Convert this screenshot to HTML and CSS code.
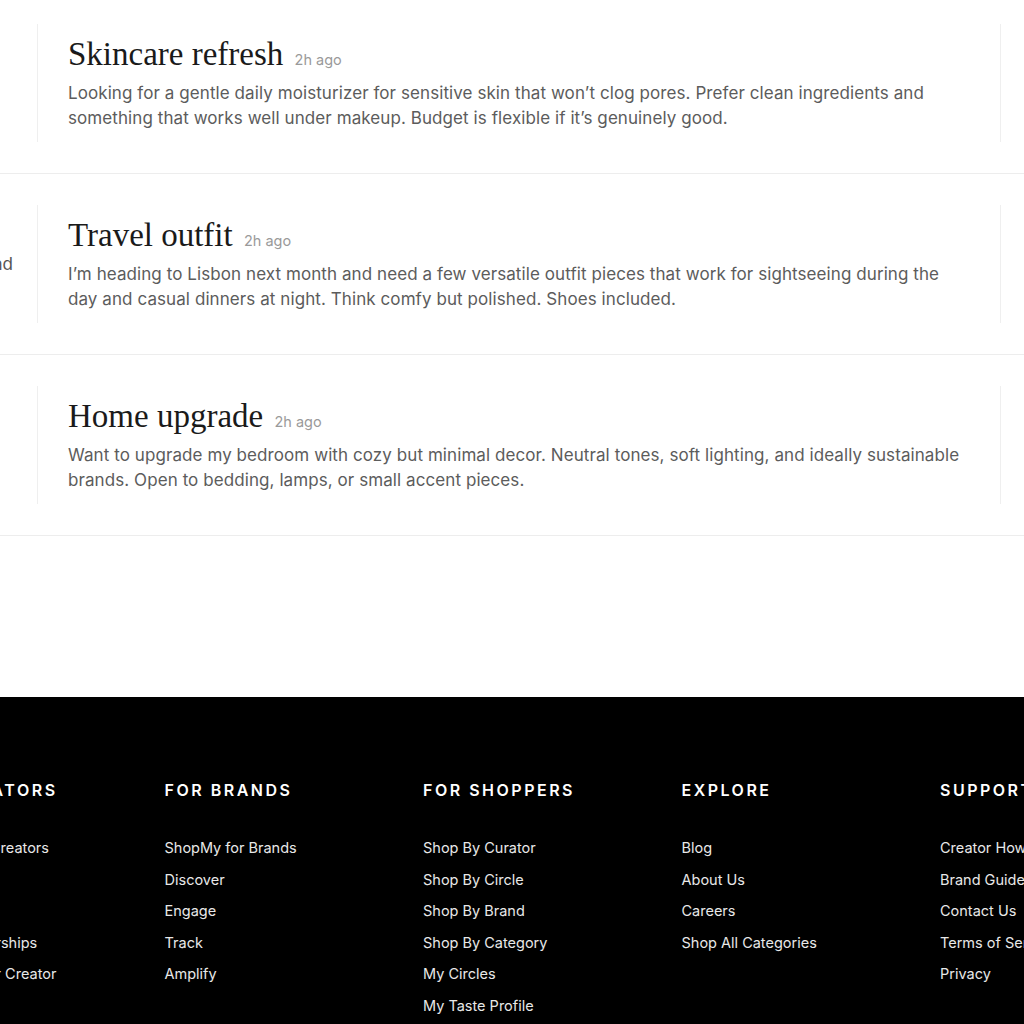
FILE: index.html
```html
<!DOCTYPE html>
<html lang="en">
<head>
    <meta charset="UTF-8">
    <meta name="viewport" content="width=device-width, initial-scale=1.0">
    <title>Requests</title>
    <link rel="stylesheet" href="styles.css">
</head>
<body>
    <div class="page">
        <div class="requests">
            <div class="request">
                <div class="request-meta"></div>
                <div class="request-body">
                    <h3>Skincare refresh <span class="time">2h ago</span></h3>
                    <p>Looking for a gentle daily moisturizer for sensitive skin that won’t clog pores. Prefer clean ingredients and something that works well under makeup. Budget is flexible if it’s genuinely good.</p>
                </div>
                <div class="request-side"></div>
            </div>
            <div class="request">
                <div class="request-meta"><span>Outfits and</span></div>
                <div class="request-body">
                    <h3>Travel outfit <span class="time">2h ago</span></h3>
                    <p>I’m heading to Lisbon next month and need a few versatile outfit pieces that work for sightseeing during the day and casual dinners at night. Think comfy but polished. Shoes included.</p>
                </div>
                <div class="request-side"></div>
            </div>
            <div class="request">
                <div class="request-meta"></div>
                <div class="request-body">
                    <h3>Home upgrade <span class="time">2h ago</span></h3>
                    <p>Want to upgrade my bedroom with cozy but minimal decor. Neutral tones, soft lighting, and ideally sustainable brands. Open to bedding, lamps, or small accent pieces.</p>
                </div>
                <div class="request-side"></div>
            </div>
        </div>

        <footer class="footer">
            <div class="footer-col">
                <h4>For Creators</h4>
                <a href="#">ShopMy for Creators</a>
                <a href="#">Earn</a>
                <a href="#">Collabs</a>
                <a href="#">Brand Partnerships</a>
                <a href="#">Refer Another Creator</a>
            </div>
            <div class="footer-col">
                <h4>For Brands</h4>
                <a href="#">ShopMy for Brands</a>
                <a href="#">Discover</a>
                <a href="#">Engage</a>
                <a href="#">Track</a>
                <a href="#">Amplify</a>
            </div>
            <div class="footer-col">
                <h4>For Shoppers</h4>
                <a href="#">Shop By Curator</a>
                <a href="#">Shop By Circle</a>
                <a href="#">Shop By Brand</a>
                <a href="#">Shop By Category</a>
                <a href="#">My Circles</a>
                <a href="#">My Taste Profile</a>
            </div>
            <div class="footer-col">
                <h4>Explore</h4>
                <a href="#">Blog</a>
                <a href="#">About Us</a>
                <a href="#">Careers</a>
                <a href="#">Shop All Categories</a>
            </div>
            <div class="footer-col">
                <h4>Support</h4>
                <a href="#">Creator How-To</a>
                <a href="#">Brand Guide</a>
                <a href="#">Contact Us</a>
                <a href="#">Terms of Service</a>
                <a href="#">Privacy</a>
            </div>
        </footer>
    </div>
</body>
</html>
```

FILE: styles.css
```css
body {
    margin: 0;
    background: #fff;
    font-family: Inter, "Noto Sans", sans-serif;
    overflow: hidden;
}
.page {
    margin-left: -94px;
    width: 1400px;
}
.requests {
    margin-top: -7px;
}
.request {
    display: grid;
    grid-template-columns: 131px 964px 1fr;
    padding: 31px 0;
    border-bottom: 1px solid #ededed;
}
.request-meta {
    align-self: center;
    padding-right: 24px;
    text-align: right;
    font-size: 17px;
    line-height: 25px;
    color: #555;
}
.request-body {
    border-left: 1px solid #efefef;
    border-right: 1px solid #efefef;
    padding: 10px 30px 11px;
}
.request-body h3 {
    margin: 0 0 7px 0;
    font-family: "Liberation Serif", "DejaVu Serif", serif;
    font-weight: normal;
    font-size: 33px;
    line-height: 40px;
    height: 40px;
    color: #1a1a1a;
}
.time {
    margin-left: 3px;
    font-family: Inter, "Noto Sans", sans-serif;
    font-size: 14.5px;
    line-height: 1;
    color: #9a9a9a;
}
.request-body p {
    margin: 0;
    font-size: 17px;
    line-height: 25px;
    letter-spacing: 0.08px;
    color: #5c5c5c;
}
.footer {
    margin-top: 161px;
    background: #000;
    padding: 82px 0 40px;
    display: grid;
    grid-template-columns: repeat(5, 258.5px);
}
.footer-col {
    display: flex;
    flex-direction: column;
}
.footer-col h4 {
    margin: 0 0 31px 0;
    font-size: 16px;
    line-height: 22px;
    font-weight: 600;
    letter-spacing: 2.5px;
    text-transform: uppercase;
    color: #fff;
}
.footer-col a {
    font-size: 14.5px;
    line-height: 31.6px;
    color: #e8e8e8;
    text-decoration: none;
}
```
